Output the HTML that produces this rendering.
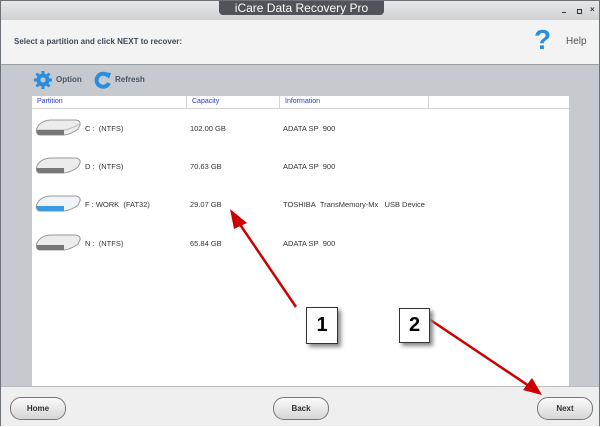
<!DOCTYPE html>
<html><head><style>
body{margin:0;width:600px;height:426px;overflow:hidden;font-family:"Liberation Sans",sans-serif;background:#fff}
.win{position:absolute;left:0;top:0;width:598px;height:424px;border:1px solid #6d7278;background:#c6cacf}
.tb{position:absolute;left:0;top:0;width:598px;height:19px;background:linear-gradient(#e6e7e8,#cfd1d3)}
.tab{position:absolute;left:218px;top:0;width:165px;height:14px;background:#505357;border-radius:0 0 4px 4px;color:#fff;font-size:12px;text-align:center;line-height:14px}
.hdr{position:absolute;left:0;top:19px;width:598px;height:44px;background:#f3f3f3;border-bottom:1px solid #9aa0a6}
.list{position:absolute;left:31px;top:95px;width:537px;height:290px;background:#fff}
.lh{position:absolute;left:0;top:0;width:537px;height:12px;border-bottom:1px solid #d6d6d6;font-size:7px;color:#2a3cc8;line-height:12px}
.lh span{position:absolute;top:0;height:12px;border-left:1px solid #d6d6d6;padding-left:5px}
.row{position:absolute;font-size:7.5px;color:#333}
.bot{position:absolute;left:0;top:385px;width:598px;height:39px;background:#efefef;border-top:1px solid #b8bcc0}
.btn{position:absolute;top:10px;width:54px;height:21px;border:1px solid #777;border-radius:11px;background:linear-gradient(#fafafa,#d6d6d6);font-size:8px;font-weight:bold;text-align:center;line-height:21px;color:#333}
.disk{position:absolute;width:48px;height:20px}
.box{position:absolute;background:#fff;border:1px solid #333;font-size:20px;font-weight:bold;text-align:center;box-shadow:3px 3px 4px #888}
.ctl{position:absolute;top:8px;width:3px;height:3px;background:#333}
</style></head><body>
<div class="win">
<div class="tb"></div>
<div class="tab">iCare Data Recovery Pro</div>
<div class="ctl" style="left:561px;top:11px;height:1px;width:4px"></div>
<div class="ctl" style="left:576px;width:3px;height:3px;background:none;border:1px solid #333"></div>
<div style="position:absolute;left:589px;top:4px;font-size:8px;font-weight:bold;color:#333">×</div>
<div class="hdr">
<div style="position:absolute;left:13px;top:17px;font-size:8px;font-weight:bold;color:#3f4a5a">Select a partition and click NEXT to recover:</div>
<div style="position:absolute;left:533px;top:4px;font-size:28px;font-weight:bold;color:#2a8ee0">?</div>
<div style="position:absolute;left:565px;top:16px;font-size:10px;color:#555">Help</div>
</div>
<svg style="position:absolute;left:33px;top:70px" width="18" height="18" viewBox="0 0 18 18"><circle cx="9" cy="9" r="6.5" fill="#2a8ee0"/><g stroke="#2a8ee0" stroke-width="3"><line x1="9" y1="0" x2="9" y2="18"/><line x1="0" y1="9" x2="18" y2="9"/><line x1="2.5" y1="2.5" x2="15.5" y2="15.5"/><line x1="15.5" y1="2.5" x2="2.5" y2="15.5"/></g><circle cx="9" cy="9" r="2.5" fill="#c6cacf"/></svg>
<div style="position:absolute;left:55px;top:74px;font-size:8px;font-weight:bold;color:#4a5666">Option</div>
<svg style="position:absolute;left:93px;top:70px" width="18" height="18" viewBox="0 0 18 18"><path d="M14 5 A6.5 6.5 0 1 0 15 12" fill="none" stroke="#2a8ee0" stroke-width="4"/><polygon points="10,1 17,2 15,8" fill="#2a8ee0"/></svg>
<div style="position:absolute;left:114px;top:74px;font-size:8px;font-weight:bold;color:#4a5666">Refresh</div>
<div class="list">
<div class="lh"><span style="left:0;border:0">Partition</span><span style="left:154px">Capacity</span><span style="left:247px">Information</span><span style="left:396px;width:140px"></span></div>
<div class="disk" style="left:2px;top:21px"><svg width="48" height="20"><path d="M3 11 Q6 4 16 3 L42 3 Q47 4 46 8 L44 12 Q38 17 30 18 L5 18 Q1 16 3 11 Z" fill="#ececec" stroke="#999"/><path d="M3 13 L30 13 Q40 11 45 7" fill="none" stroke="#bbb"/><path d="M3 13 L30 13 L30 18 L5 18 Q2 16 3 13Z" fill="#777"/></svg></div>
<div class="disk" style="left:2px;top:59px"><svg width="48" height="20"><path d="M3 11 Q6 4 16 3 L42 3 Q47 4 46 8 L44 12 Q38 17 30 18 L5 18 Q1 16 3 11 Z" fill="#ececec" stroke="#999"/><path d="M3 13 L30 13 L30 18 L5 18 Q2 16 3 13Z" fill="#777"/></svg></div>
<div class="disk" style="left:2px;top:97px"><svg width="48" height="20"><path d="M3 11 Q6 4 16 3 L42 3 Q47 4 46 8 L44 12 Q38 17 30 18 L5 18 Q1 16 3 11 Z" fill="#f0f4f8" stroke="#999"/><path d="M3 13 L30 13 L30 18 L5 18 Q2 16 3 13Z" fill="#3a9ae0"/></svg></div>
<div class="disk" style="left:2px;top:136px"><svg width="48" height="20"><path d="M3 11 Q6 4 16 3 L42 3 Q47 4 46 8 L44 12 Q38 17 30 18 L5 18 Q1 16 3 11 Z" fill="#ececec" stroke="#999"/><path d="M3 13 L30 13 L30 18 L5 18 Q2 16 3 13Z" fill="#777"/></svg></div>
<div class="row" style="left:53px;top:28px">C :&nbsp; (NTFS)</div><div class="row" style="left:158px;top:28px">102.00 GB</div><div class="row" style="left:251px;top:28px">ADATA SP&nbsp; 900</div>
<div class="row" style="left:53px;top:66px">D :&nbsp; (NTFS)</div><div class="row" style="left:158px;top:66px">70.63 GB</div><div class="row" style="left:251px;top:66px">ADATA SP&nbsp; 900</div>
<div class="row" style="left:53px;top:104px">F : WORK&nbsp; (FAT32)</div><div class="row" style="left:158px;top:104px">29.07 GB</div><div class="row" style="left:251px;top:104px">TOSHIBA&nbsp; TransMemory-Mx&nbsp;&nbsp; USB Device</div>
<div class="row" style="left:53px;top:143px">N :&nbsp; (NTFS)</div><div class="row" style="left:158px;top:143px">65.84 GB</div><div class="row" style="left:251px;top:143px">ADATA SP&nbsp; 900</div>
</div>
<div class="bot">
<div class="btn" style="left:9px">Home</div>
<div class="btn" style="left:272px">Back</div>
<div class="btn" style="left:536px">Next</div>
</div>
<svg style="position:absolute;left:0;top:0" width="600" height="426">
<line x1="295" y1="306" x2="238" y2="222" stroke="#c00" stroke-width="2.5"/>
<polygon points="229,208 246,222 233,228" fill="#c00"/>
<line x1="428" y1="318" x2="528" y2="385" stroke="#c00" stroke-width="2.5"/>
<polygon points="541,394 522,389 531,377" fill="#c00"/>
</svg>
<div class="box" style="left:305px;top:306px;width:30px;height:35px;line-height:35px">1</div>
<div class="box" style="left:398px;top:307px;width:29px;height:33px;line-height:33px">2</div>
</div>
</body></html>
